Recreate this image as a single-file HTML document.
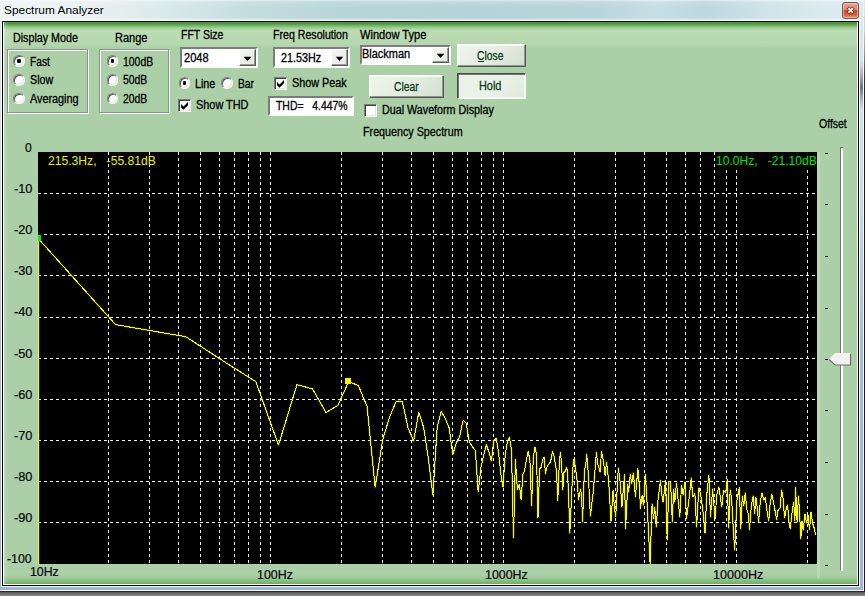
<!DOCTYPE html><html><head><meta charset="utf-8"><title>Spectrum Analyzer</title><style>
html,body{margin:0;padding:0;}
body{width:865px;height:596px;overflow:hidden;position:relative;background:#6e6e6e;font-family:"Liberation Sans",Arial,sans-serif;font-size:12px;}
div,span{box-sizing:border-box;}
.abs{position:absolute;}
#shadow{left:0;top:591px;width:865px;height:5px;background:linear-gradient(#4a4a4a,#8a8a8a);}
#frame{left:0;top:0;width:864px;height:591px;background:linear-gradient(180deg,#dcebf0 0px,#d2e4ea 80px,#c4dae4 200px,#a4bcd8 340px,#9db5d6 591px);}
#frameR{left:863px;top:0;width:1px;height:591px;background:#f4f8fa;}
#frameB{left:0;top:590px;width:864px;height:1px;background:#f4f8fa;}
#edgeR{left:864px;top:0;width:1px;height:592px;background:linear-gradient(180deg,#e4ecee 0px,#c9d0d2 30px,#8a9092 55px,#3a3c3c 75px,#1c1c1c 100px,#1c1c1c 592px);}
#blob{left:860px;top:62px;width:3px;height:48px;background:linear-gradient(180deg,rgba(110,116,120,0) 0px,rgba(110,116,120,.55) 16px,rgba(96,100,104,.9) 26px,rgba(110,116,120,.55) 34px,rgba(110,116,120,0) 48px);}
#edgeB{left:0;top:591px;width:865px;height:1px;background:#2a2a2a;}
#title{left:0;top:0;width:864px;height:21px;background:linear-gradient(90deg,#eef4f4 0px,#e9f1f1 90px,#d9e8e9 170px,#c4dcdf 250px,#b8d5d9 340px,#b5d3d8 470px,#b9d5dc 600px,#c7dee5 655px,#bcd8df 705px,#cfe3e9 765px,#dbebf0 830px,#dcebf0 864px);}
#titlehl{left:0;top:0;width:864px;height:21px;background:linear-gradient(180deg,rgba(255,255,255,.55) 0px,rgba(255,255,255,.12) 2px,rgba(255,255,255,0) 8px,rgba(255,255,255,0) 18px,rgba(255,255,255,.5) 20px);}
#xbtn{left:842px;top:2px;width:17px;height:17px;border:1px solid #6d5a58;border-radius:3px;background:linear-gradient(180deg,#f0a08c 0%,#e8836c 45%,#cf4a2c 50%,#d9583a 75%,#ee8e6c 100%);box-shadow:inset 0 0 0 1px rgba(255,210,200,.55);}
#client{left:2px;top:21px;width:857px;height:565px;border:1px solid #000;background:#fff;box-shadow:0 0 0 1px rgba(255,255,255,.92);}
#green{left:4px;top:22px;width:853px;height:562px;background:linear-gradient(180deg,#5fa852 0px,#3f9030 1px,#4f9e42 2px,#7cb870 4px,#a2ce9a 6px,#b8dab0 8px,#bbdcb3 9px,#badbb2 15px,#b3d5ad 24px,#b1d3ab 24.5px,#abcfa6 25.5px,#abcfa6 553px,#9fca98 556px,#86bd7c 559px,#6cb05e 562px);}
#greenL{left:3px;top:22px;width:5px;height:562px;background:linear-gradient(90deg,rgba(255,255,255,.25),rgba(255,255,255,0));}
.gbw{border:1px solid #fff;}
.gbg{border:1px solid #8a948a;}
.radio{width:12px;height:12px;border-radius:50%;background:#fff;border:1px solid;border-color:#7e7e7e #f6fbf6 #f6fbf6 #7e7e7e;box-shadow:inset 1px 1px 0.5px #5a5a5a, inset -1px -1px 0 #dde8db;}
.radio.on::after{content:"";position:absolute;left:2.85px;top:2.85px;width:3.8px;height:3.8px;border-radius:1.3px;background:#000;}
.chk{width:13px;height:13px;background:#fff;border:1px solid;border-color:#7a7a7a #fff #fff #7a7a7a;box-shadow:inset 1px 1px 0 #404040, inset -1px -1px 0 #dfe6dd;}
.combo{background:#fff;border:2px solid;border-color:#7c7c7c #fff #fff #7c7c7c;}
.dd{background:linear-gradient(135deg,#f4f6f4,#e4e8e4);border:1px solid;border-color:#fff #5a5a5a #5a5a5a #fff;box-shadow:inset -1px -1px 0 #9a9a9a;}
.edit{background:#fff;border:2px solid;border-color:#7c7c7c #fff #fff #7c7c7c;}
.btn{background:linear-gradient(135deg,#eef6ec 0%,#e2ecdf 55%,#d3dfd0 100%);border:1px solid;border-color:#fff #585858 #585858 #fff;box-shadow:inset -1px -1px 0 #8e968c, inset 1px 1px 0 #f8fcf8;}
.btn.down{border-color:#4a4a4a #fff #fff #4a4a4a;box-shadow:inset 1px 1px 0 #767676, inset -1px -1px 0 #f4f8f4;background:linear-gradient(135deg,#eaf3e7 0%,#e8f1e5 60%,#dde8da 100%);}
#plot{left:38px;top:152px;width:779px;height:412px;background:#000;overflow:hidden;}
.tick{background:#0a0a0a;}

.t{position:absolute;white-space:pre;line-height:16px;height:16px;transform-origin:0 0;font-family:"Liberation Sans", Arial, sans-serif;}
.t.px{-webkit-text-stroke:0.3px currentColor;}
.t.ax{-webkit-text-stroke:0.22px currentColor;}
</style></head><body>
<div class="abs" id="shadow"></div><div class="abs" id="frame"></div><div class="abs" id="title"></div><div class="abs" id="titlehl"></div>
<div class="abs" id="frameR"></div><div class="abs" id="frameB"></div><div class="abs" id="edgeR"></div><div class="abs" id="blob"></div><div class="abs" id="edgeB"></div>
<div class="abs" id="xbtn"><svg class="abs" style="left:0;top:0" width="15" height="15" viewBox="0 0 15 15"><path d="M6 5.8 L9.2 9 M9.2 5.8 L6 9" stroke="#5a2418" stroke-width="3.4" stroke-linecap="square" opacity=".7"/><path d="M6 5.8 L9.2 9 M9.2 5.8 L6 9" stroke="#fff" stroke-width="1.7" stroke-linecap="square"/></svg></div>
<div class="abs" id="client"></div><div class="abs" id="green"></div><div class="abs" id="greenL"></div>
<div class="abs gbw" style="left:8px;top:50px;width:81px;height:64px;"></div>
<div class="abs gbg" style="left:7px;top:49px;width:81px;height:64px;"></div>
<div class="abs gbw" style="left:100px;top:50px;width:70px;height:64px;"></div>
<div class="abs gbg" style="left:99px;top:49px;width:70px;height:64px;"></div>
<div class="abs radio on" style="left:13.25px;top:55.25px;width:11.5px;height:11.5px;"></div>
<div class="abs radio" style="left:13.25px;top:74.25px;width:11.5px;height:11.5px;"></div>
<div class="abs radio" style="left:13.25px;top:92.75px;width:11.5px;height:11.5px;"></div>
<div class="abs radio on" style="left:106.75px;top:55.25px;width:11.5px;height:11.5px;"></div>
<div class="abs radio" style="left:106.75px;top:74.25px;width:11.5px;height:11.5px;"></div>
<div class="abs radio" style="left:106.75px;top:92.75px;width:11.5px;height:11.5px;"></div>
<div class="abs radio on" style="left:178.75px;top:77.25px;width:11.5px;height:11.5px;"></div>
<div class="abs radio" style="left:221.25px;top:77.25px;width:11.5px;height:11.5px;"></div>
<div class="abs combo" style="left:180px;top:47px;width:78px;height:21px;"></div>
<div class="abs dd" style="left:239px;top:49px;width:17px;height:17px;"></div>
<svg class="abs" style="left:243px;top:55.5px" width="9" height="6" viewBox="0 0 9 6"><path d="M0.7 0.8 H8.3 L4.5 4.9 Z" fill="#000"/></svg>
<div class="abs combo" style="left:273px;top:47px;width:77px;height:21px;"></div>
<div class="abs dd" style="left:331px;top:49px;width:17px;height:17px;"></div>
<svg class="abs" style="left:335px;top:55.5px" width="9" height="6" viewBox="0 0 9 6"><path d="M0.7 0.8 H8.3 L4.5 4.9 Z" fill="#000"/></svg>
<div class="abs combo" style="left:360px;top:45px;width:91px;height:20px;"></div>
<div class="abs dd" style="left:432px;top:47px;width:17px;height:16px;"></div>
<svg class="abs" style="left:436px;top:53px" width="9" height="6" viewBox="0 0 9 6"><path d="M0.7 0.8 H8.3 L4.5 4.9 Z" fill="#000"/></svg>
<div class="abs chk" style="left:178px;top:99px;width:13px;height:13px;"></div>
<svg class="abs" style="left:178px;top:99px" width="13" height="13" viewBox="0 0 13 13"><path d="M3 4.9 L5.5 7.4 L10 2.9 V6.2 L5.5 10.7 L3 8.2 Z" fill="#000"/></svg>
<div class="abs chk" style="left:274px;top:77px;width:13px;height:13px;"></div>
<svg class="abs" style="left:274px;top:77px" width="13" height="13" viewBox="0 0 13 13"><path d="M3 4.9 L5.5 7.4 L10 2.9 V6.2 L5.5 10.7 L3 8.2 Z" fill="#000"/></svg>
<div class="abs chk" style="left:364px;top:104px;width:13px;height:13px;"></div>
<div class="abs edit" style="left:268px;top:96px;width:86px;height:19.5px;"></div>
<div class="abs btn" style="left:369px;top:75px;width:75px;height:23px;"></div>
<div class="abs btn" style="left:457px;top:44px;width:69px;height:23px;"></div>
<div class="abs btn down" style="left:457px;top:73px;width:69px;height:26px;"></div>
<div class="abs " style="left:478px;top:61px;width:6px;height:1px;background:#123c22"></div>
<div class="abs " style="left:840px;top:147px;width:1px;height:423px;background:#777077"></div>
<div class="abs " style="left:841px;top:147px;width:2px;height:424px;background:#fff"></div>
<div class="abs " style="left:817px;top:152px;width:2.5px;height:427px;background:rgba(255,255,255,.2)"></div>
<div class="abs " style="left:840px;top:147px;width:3px;height:1px;background:#777077"></div>
<div class="abs tick" style="left:824.5px;top:153px;width:3px;height:1px;"></div>
<div class="abs tick" style="left:824.5px;top:204px;width:3px;height:1px;"></div>
<div class="abs tick" style="left:824.5px;top:256px;width:3px;height:1px;"></div>
<div class="abs tick" style="left:824.5px;top:308px;width:3px;height:1px;"></div>
<div class="abs tick" style="left:824.5px;top:359px;width:3px;height:1px;"></div>
<div class="abs tick" style="left:824.5px;top:410px;width:3px;height:1px;"></div>
<div class="abs tick" style="left:824.5px;top:462px;width:3px;height:1px;"></div>
<div class="abs tick" style="left:824.5px;top:514px;width:3px;height:1px;"></div>
<div class="abs tick" style="left:824.5px;top:565px;width:3px;height:1px;"></div>
<svg class="abs" style="left:827px;top:352px" width="26" height="15" viewBox="0 0 26 15"><path d="M2.2 7.5 L8 1.8 H23.5 V13 H8 Z" fill="#f1f1ef" stroke="none"/><path d="M2.2 7.5 L8 1.8 H23.5" fill="none" stroke="#fff" stroke-width="1"/><path d="M23.5 1.8 V13 H8 L2.2 7.5" fill="none" stroke="#6c6c6c" stroke-width="1.2"/></svg>
<div class="abs" id="plot"><svg width="779" height="412" viewBox="38 152 779 412" style="position:absolute;left:0;top:0" shape-rendering="auto">
<path d="M38 193.5 H817 M38 234.5 H817 M38 275.5 H817 M38 317.5 H817 M38 358.5 H817 M38 399.5 H817 M38 440.5 H817 M38 481.5 H817 M38 522.5 H817" stroke="#f2f2f2" stroke-width="1" stroke-dasharray="3 3" fill="none" shape-rendering="crispEdges"/>
<path d="M108.5 152 V564 M149.5 152 V564 M178.5 152 V564 M200.5 152 V564 M219.5 152 V564 M234.5 152 V564 M248.5 152 V564 M260.5 152 V564 M270.5 152 V564 M341.5 152 V564 M382.5 152 V564 M411.5 152 V564 M433.5 152 V564 M452.5 152 V564 M467.5 152 V564 M481.5 152 V564 M493.5 152 V564 M503.5 152 V564 M574.5 152 V564 M615.5 152 V564 M644.5 152 V564 M666.5 152 V564 M685.5 152 V564 M700.5 152 V564 M714.5 152 V564 M726.5 152 V564 M736.5 152 V564 M807.5 152 V564" stroke="#f2f2f2" stroke-width="1" stroke-dasharray="3 3" fill="none" shape-rendering="crispEdges"/>
<rect x="715" y="152" width="102" height="17" fill="#000"/>
<path d="M38.5 563.5 L38.5 238.8 L115.6 324.6 L185.8 336.7 L226.8 363.3 L255.9 381.7 L278.5 445.1 L296.9 384.7 L312.5 388.9 L326.0 412.5 L338.0 405.3 L348.6 381.7 L358.3 385.5 L367.1 406.5 L375.2 487.4 L382.7 439.7 L389.6 417.0 L396.2 401.3 L402.3 401.5 L408.1 428.0 L413.6 441.1 L418.8 412.1 L423.7 427.7 L428.4 458.7 L432.9 494.8 L437.2 426.8 L441.3 411.4 L445.3 418.5 L449.1 427.7 L452.8 454.5 L456.4 442.8 L459.8 436.1 L463.1 420.1 L466.3 423.5 L469.4 441.9 L472.4 447.0 L475.4 450.3 L478.2 492.3 L481.0 467.0 L483.7 455.4 L486.3 444.5 L488.9 452.0 L491.4 461.2 L493.8 440.3 L496.2 438.3 L498.5 452.0 L500.8 473.8 L503.0 487.2 L505.2 455.4 L507.3 442.0 L509.4 437.0 L511.5 450.0 L513.5 537.9 L515.4 459.2 L517.4 490.0 L519.3 484.4 L521.1 499.6 L522.9 474.3 L524.7 470.3 L526.5 459.2 L528.2 451.1 L529.9 460.2 L531.6 505.6 L533.2 459.2 L534.9 447.1 L536.5 453.7 L538.0 517.7 L539.6 468.8 L541.1 467.3 L542.6 459.7 L544.1 457.2 L545.5 473.8 L547.0 466.8 L548.4 464.7 L549.8 463.2 L551.1 459.2 L552.5 451.1 L553.8 455.2 L555.2 463.2 L556.5 471.3 L557.8 500.6 L559.0 470.3 L560.3 452.2 L561.5 462.2 L562.8 490.0 L564.0 472.3 L565.2 471.3 L566.4 467.3 L567.5 471.3 L568.7 498.0 L569.8 533.3 L571.0 508.2 L572.1 484.4 L573.2 463.2 L574.3 457.2 L575.4 469.3 L576.4 474.3 L577.5 484.4 L578.5 500.1 L579.6 494.0 L580.6 489.0 L581.6 496.0 L582.6 522.3 L583.6 490.0 L584.6 468.3 L585.6 467.0 L586.6 454.2 L587.5 462.0 L588.5 478.0 L590.4 516.3 L593.4 490.3 L596.4 452.1 L597.6 463.5 L600.1 471.9 L601.5 451.4 L603.5 461.8 L605.2 476.1 L606.5 461.8 L608.5 478.6 L611.0 521.4 L613.1 490.3 L614.4 507.1 L615.7 517.2 L618.3 467.7 L620.3 483.6 L621.9 507.1 L624.5 474.4 L625.6 528.9 L627.8 483.6 L628.7 492.0 L630.3 473.6 L631.7 483.6 L633.4 472.7 L635.4 497.0 L637.9 468.5 L639.6 488.7 L640.4 508.8 L642.1 495.4 L643.4 505.4 L645.4 474.4 L647.1 503.8 L650.1 563.5 L652.1 503.8 L653.5 518.9 L654.7 507.1 L656.3 527.2 L658.0 500.4 L660.5 480.3 L661.9 495.4 L663.1 502.1 L665.6 480.3 L667.2 540.0 L668.9 481.9 L670.6 481.9 L672.3 522.2 L673.6 488.7 L674.8 502.1 L676.5 482.8 L679.8 517.2 L681.5 485.3 L683.2 495.4 L684.9 481.9 L686.5 518.9 L689.1 498.7 L691.2 477.8 L692.8 497.0 L694.9 493.7 L696.6 527.2 L698.8 487.8 L700.5 493.7 L702.5 507.1 L705.0 533.1 L706.7 495.4 L708.9 475.2 L710.5 517.2 L712.6 488.7 L715.1 518.9 L716.7 495.4 L718.9 487.0 L721.8 507.1 L723.5 490.3 L725.7 492.7 L727.2 479.1 L728.7 528.2 L730.2 489.6 L731.7 500.2 L733.2 527.4 L734.7 550.1 L736.0 519.8 L737.0 500.2 L739.3 487.4 L740.8 528.9 L742.3 495.7 L743.8 506.3 L745.3 492.7 L746.8 509.3 L748.3 513.8 L749.5 529.7 L751.4 504.7 L753.2 495.7 L754.7 513.8 L755.9 497.2 L757.4 509.3 L758.6 522.1 L760.4 500.2 L762.2 492.7 L763.7 500.2 L765.3 497.2 L766.8 509.3 L768.7 521.4 L770.2 503.2 L771.8 494.2 L773.3 501.7 L774.8 509.3 L776.7 519.8 L777.8 510.8 L780.1 507.8 L781.6 489.6 L783.1 498.7 L784.6 518.3 L786.1 509.3 L787.6 504.7 L789.1 522.9 L790.3 528.9 L792.1 512.3 L793.7 501.7 L794.9 521.4 L795.6 487.4 L797.1 522.1 L798.5 495.7 L799.7 515.3 L800.8 538.7 L802.0 521.4 L803.2 530.4 L805.0 513.8 L806.5 522.9 L808.0 515.3 L809.5 529.7 L811.0 512.3 L812.5 522.9 L814.0 527.4 L815.6 535.0" stroke="#f8f800" stroke-width="1.9" fill="none" stroke-linejoin="round" opacity=".3"/>
<path d="M38.5 563.5 L38.5 238.8 L115.6 324.6 L185.8 336.7 L226.8 363.3 L255.9 381.7 L278.5 445.1 L296.9 384.7 L312.5 388.9 L326.0 412.5 L338.0 405.3 L348.6 381.7 L358.3 385.5 L367.1 406.5 L375.2 487.4 L382.7 439.7 L389.6 417.0 L396.2 401.3 L402.3 401.5 L408.1 428.0 L413.6 441.1 L418.8 412.1 L423.7 427.7 L428.4 458.7 L432.9 494.8 L437.2 426.8 L441.3 411.4 L445.3 418.5 L449.1 427.7 L452.8 454.5 L456.4 442.8 L459.8 436.1 L463.1 420.1 L466.3 423.5 L469.4 441.9 L472.4 447.0 L475.4 450.3 L478.2 492.3 L481.0 467.0 L483.7 455.4 L486.3 444.5 L488.9 452.0 L491.4 461.2 L493.8 440.3 L496.2 438.3 L498.5 452.0 L500.8 473.8 L503.0 487.2 L505.2 455.4 L507.3 442.0 L509.4 437.0 L511.5 450.0 L513.5 537.9 L515.4 459.2 L517.4 490.0 L519.3 484.4 L521.1 499.6 L522.9 474.3 L524.7 470.3 L526.5 459.2 L528.2 451.1 L529.9 460.2 L531.6 505.6 L533.2 459.2 L534.9 447.1 L536.5 453.7 L538.0 517.7 L539.6 468.8 L541.1 467.3 L542.6 459.7 L544.1 457.2 L545.5 473.8 L547.0 466.8 L548.4 464.7 L549.8 463.2 L551.1 459.2 L552.5 451.1 L553.8 455.2 L555.2 463.2 L556.5 471.3 L557.8 500.6 L559.0 470.3 L560.3 452.2 L561.5 462.2 L562.8 490.0 L564.0 472.3 L565.2 471.3 L566.4 467.3 L567.5 471.3 L568.7 498.0 L569.8 533.3 L571.0 508.2 L572.1 484.4 L573.2 463.2 L574.3 457.2 L575.4 469.3 L576.4 474.3 L577.5 484.4 L578.5 500.1 L579.6 494.0 L580.6 489.0 L581.6 496.0 L582.6 522.3 L583.6 490.0 L584.6 468.3 L585.6 467.0 L586.6 454.2 L587.5 462.0 L588.5 478.0 L590.4 516.3 L593.4 490.3 L596.4 452.1 L597.6 463.5 L600.1 471.9 L601.5 451.4 L603.5 461.8 L605.2 476.1 L606.5 461.8 L608.5 478.6 L611.0 521.4 L613.1 490.3 L614.4 507.1 L615.7 517.2 L618.3 467.7 L620.3 483.6 L621.9 507.1 L624.5 474.4 L625.6 528.9 L627.8 483.6 L628.7 492.0 L630.3 473.6 L631.7 483.6 L633.4 472.7 L635.4 497.0 L637.9 468.5 L639.6 488.7 L640.4 508.8 L642.1 495.4 L643.4 505.4 L645.4 474.4 L647.1 503.8 L650.1 563.5 L652.1 503.8 L653.5 518.9 L654.7 507.1 L656.3 527.2 L658.0 500.4 L660.5 480.3 L661.9 495.4 L663.1 502.1 L665.6 480.3 L667.2 540.0 L668.9 481.9 L670.6 481.9 L672.3 522.2 L673.6 488.7 L674.8 502.1 L676.5 482.8 L679.8 517.2 L681.5 485.3 L683.2 495.4 L684.9 481.9 L686.5 518.9 L689.1 498.7 L691.2 477.8 L692.8 497.0 L694.9 493.7 L696.6 527.2 L698.8 487.8 L700.5 493.7 L702.5 507.1 L705.0 533.1 L706.7 495.4 L708.9 475.2 L710.5 517.2 L712.6 488.7 L715.1 518.9 L716.7 495.4 L718.9 487.0 L721.8 507.1 L723.5 490.3 L725.7 492.7 L727.2 479.1 L728.7 528.2 L730.2 489.6 L731.7 500.2 L733.2 527.4 L734.7 550.1 L736.0 519.8 L737.0 500.2 L739.3 487.4 L740.8 528.9 L742.3 495.7 L743.8 506.3 L745.3 492.7 L746.8 509.3 L748.3 513.8 L749.5 529.7 L751.4 504.7 L753.2 495.7 L754.7 513.8 L755.9 497.2 L757.4 509.3 L758.6 522.1 L760.4 500.2 L762.2 492.7 L763.7 500.2 L765.3 497.2 L766.8 509.3 L768.7 521.4 L770.2 503.2 L771.8 494.2 L773.3 501.7 L774.8 509.3 L776.7 519.8 L777.8 510.8 L780.1 507.8 L781.6 489.6 L783.1 498.7 L784.6 518.3 L786.1 509.3 L787.6 504.7 L789.1 522.9 L790.3 528.9 L792.1 512.3 L793.7 501.7 L794.9 521.4 L795.6 487.4 L797.1 522.1 L798.5 495.7 L799.7 515.3 L800.8 538.7 L802.0 521.4 L803.2 530.4 L805.0 513.8 L806.5 522.9 L808.0 515.3 L809.5 529.7 L811.0 512.3 L812.5 522.9 L814.0 527.4 L815.6 535.0" stroke="#fafa00" stroke-width="1" fill="none" stroke-linejoin="miter" stroke-miterlimit="2" shape-rendering="crispEdges"/>
<rect x="38" y="234" width="3" height="1" fill="#000"/>
<rect x="35" y="235" width="6" height="6" fill="#00f000"/>
<rect x="345" y="378" width="6" height="6" fill="#f4f400"/>
</svg></div>
<span class="t ti" style="left:4.38px;top:1.60px;font-size:11.5px;color:#000;transform:scaleX(1.0339);">Spectrum Analyzer</span>
<span class="t px" style="left:12.51px;top:29.80px;font-size:12px;color:#000;transform:scaleX(0.8926);">Display Mode</span>
<span class="t px" style="left:115.08px;top:29.80px;font-size:12px;color:#000;transform:scaleX(0.9185);">Range</span>
<span class="t px" style="left:180.82px;top:26.80px;font-size:12px;color:#000;transform:scaleX(0.8766);">FFT Size</span>
<span class="t px" style="left:272.92px;top:26.80px;font-size:12px;color:#000;transform:scaleX(0.8843);">Freq Resolution</span>
<span class="t px" style="left:360.40px;top:26.80px;font-size:12px;color:#000;transform:scaleX(0.9249);">Window Type</span>
<span class="t px" style="left:30.15px;top:53.60px;font-size:12px;color:#000;transform:scaleX(0.8539);">Fast</span>
<span class="t px" style="left:30.25px;top:72.30px;font-size:12px;color:#000;transform:scaleX(0.8902);">Slow</span>
<span class="t px" style="left:30.20px;top:90.70px;font-size:12px;color:#000;transform:scaleX(0.9019);">Averaging</span>
<span class="t px" style="left:123.33px;top:53.60px;font-size:12px;color:#000;transform:scaleX(0.8697);">100dB</span>
<span class="t px" style="left:123.47px;top:72.30px;font-size:12px;color:#000;transform:scaleX(0.8667);">50dB</span>
<span class="t px" style="left:123.47px;top:90.70px;font-size:12px;color:#000;transform:scaleX(0.8667);">20dB</span>
<span class="t px" style="left:184.14px;top:49.70px;font-size:12px;color:#000;transform:scaleX(0.9204);">2048</span>
<span class="t px" style="left:194.91px;top:75.50px;font-size:12px;color:#000;transform:scaleX(0.8941);">Line</span>
<span class="t px" style="left:237.84px;top:75.50px;font-size:12px;color:#000;transform:scaleX(0.8571);">Bar</span>
<span class="t px" style="left:196.05px;top:97.20px;font-size:12px;color:#000;transform:scaleX(0.9075);">Show THD</span>
<span class="t px" style="left:280.55px;top:49.80px;font-size:12px;color:#000;transform:scaleX(0.8966);">21.53Hz</span>
<span class="t px" style="left:292.25px;top:75.40px;font-size:12px;color:#000;transform:scaleX(0.8996);">Show Peak</span>
<span class="t px" style="left:275.68px;top:98.10px;font-size:12px;color:#000;transform:scaleX(0.8685);">THD=   4.447%</span>
<span class="t px" style="left:362.49px;top:45.60px;font-size:12px;color:#000;transform:scaleX(0.9137);">Blackman</span>
<span class="t px" style="left:393.57px;top:78.80px;font-size:12px;color:#123c22;transform:scaleX(0.8571);">Clear</span>
<span class="t px" style="left:477.37px;top:47.70px;font-size:12px;color:#123c22;transform:scaleX(0.8605);">Close</span>
<span class="t px" style="left:479.39px;top:77.90px;font-size:12px;color:#123c22;transform:scaleX(0.9087);">Hold</span>
<span class="t px" style="left:381.81px;top:102.20px;font-size:12px;color:#000;transform:scaleX(0.8945);">Dual Waveform Display</span>
<span class="t px" style="left:362.81px;top:123.60px;font-size:12px;color:#000;transform:scaleX(0.8941);">Frequency Spectrum</span>
<span class="t px" style="left:819.26px;top:115.70px;font-size:12px;color:#000;transform:scaleX(0.8736);">Offset</span>
<span class="t aa ax" style="left:25.30px;top:140.00px;font-size:12px;color:#08080f;transform:scaleX(1.0087);">0</span>
<span class="t aa ax" style="left:13.57px;top:180.95px;font-size:12px;color:#08080f;transform:scaleX(1.0606);">-10</span>
<span class="t aa ax" style="left:13.57px;top:222.10px;font-size:12px;color:#08080f;transform:scaleX(1.0606);">-20</span>
<span class="t aa ax" style="left:13.57px;top:263.25px;font-size:12px;color:#08080f;transform:scaleX(1.0606);">-30</span>
<span class="t aa ax" style="left:13.57px;top:304.40px;font-size:12px;color:#08080f;transform:scaleX(1.0606);">-40</span>
<span class="t aa ax" style="left:13.57px;top:345.55px;font-size:12px;color:#08080f;transform:scaleX(1.0606);">-50</span>
<span class="t aa ax" style="left:13.57px;top:386.70px;font-size:12px;color:#08080f;transform:scaleX(1.0606);">-60</span>
<span class="t aa ax" style="left:13.57px;top:427.85px;font-size:12px;color:#08080f;transform:scaleX(1.0606);">-70</span>
<span class="t aa ax" style="left:13.57px;top:469.00px;font-size:12px;color:#08080f;transform:scaleX(1.0606);">-80</span>
<span class="t aa ax" style="left:13.57px;top:510.15px;font-size:12px;color:#08080f;transform:scaleX(1.0606);">-90</span>
<span class="t aa ax" style="left:7.39px;top:551.10px;font-size:12px;color:#08080f;transform:scaleX(1.0217);">-100</span>
<span class="t aa ax" style="left:30.17px;top:563.90px;font-size:12px;color:#08080f;transform:scaleX(1.0264);">10Hz</span>
<span class="t aa ax" style="left:257.27px;top:567.30px;font-size:12px;color:#08080f;transform:scaleX(1.0333);">100Hz</span>
<span class="t aa ax" style="left:484.97px;top:567.30px;font-size:12px;color:#08080f;transform:scaleX(1.0314);">1000Hz</span>
<span class="t aa ax" style="left:712.95px;top:567.30px;font-size:12px;color:#08080f;transform:scaleX(1.0452);">10000Hz</span>
<span class="t aa" style="left:47.60px;top:153.30px;font-size:12px;color:#f0f000;transform:scaleX(1.0099);">215.3Hz,   -55.81dB</span>
<span class="t aa gb" style="left:715.69px;top:153.40px;font-size:12px;color:#00e600;transform:scaleX(1.0071);">10.0Hz,   -21.10dB</span>
</body></html>
